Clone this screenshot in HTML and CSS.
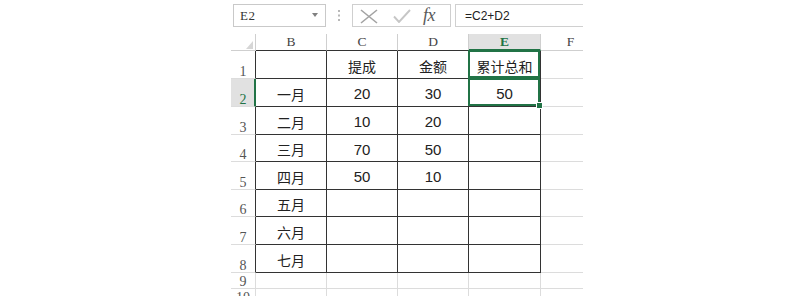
FILE: index.html
```html
<!DOCTYPE html>
<html lang="zh">
<head>
<meta charset="utf-8">
<title>Excel</title>
<link rel="stylesheet" href="styles.css">
</head>
<body>
<div class="app">
  <div class="toolbar">
    <div class="namebox">
      <span class="name">E2</span>
      <svg class="caret" width="6" height="4" viewBox="0 0 6 4"><polygon points="0,0 6,0 3,4" fill="#808080"/></svg>
    </div>
    <div class="grip">
      <svg width="2" height="11" viewBox="0 0 2 11"><rect x="0" y="0" width="2" height="2" fill="#b8b8b8"/><rect x="0" y="4.5" width="2" height="2" fill="#b8b8b8"/><rect x="0" y="9" width="2" height="2" fill="#b8b8b8"/></svg>
    </div>
    <div class="buttons">
      <svg class="ic-x" width="18" height="15" viewBox="0 0 18 15"><path d="M1 1 L17 14 M17 1 L1 14" stroke="#a3a3a3" stroke-width="1.6" fill="none"/></svg>
      <svg class="ic-check" width="18" height="14" viewBox="0 0 18 14"><path d="M1 7.5 L6 13 L17 1" stroke="#c6c6c6" stroke-width="1.9" fill="none"/></svg>
      <span class="fx">fx</span>
    </div>
    <div class="formula">=C2+D2</div>
  </div>

  <div class="sheet">
    <!-- header row -->
    <div class="c corner"><svg width="7" height="8" viewBox="0 0 7 8"><polygon points="7,0 7,8 0,8" fill="#d6d6d6"/></svg></div>
    <div class="c h tb">B</div>
    <div class="c h tb">C</div>
    <div class="c h tb">D</div>
    <div class="c h hsel">E</div>
    <div class="c h">F</div>

    <!-- row 1 -->
    <div class="c r rl">1</div>
    <div class="c t"></div>
    <div class="c t">提成</div>
    <div class="c t">金额</div>
    <div class="c t e1">累计总和</div>
    <div class="c"></div>

    <!-- row 2 -->
    <div class="c r rsel">2</div>
    <div class="c t">一月</div>
    <div class="c t n">20</div>
    <div class="c t n">30</div>
    <div class="c t n e2">50</div>
    <div class="c"></div>

    <!-- row 3 -->
    <div class="c r rl">3</div>
    <div class="c t">二月</div>
    <div class="c t n">10</div>
    <div class="c t n">20</div>
    <div class="c t"></div>
    <div class="c"></div>

    <!-- row 4 -->
    <div class="c r rl">4</div>
    <div class="c t">三月</div>
    <div class="c t n">70</div>
    <div class="c t n">50</div>
    <div class="c t"></div>
    <div class="c"></div>

    <!-- row 5 -->
    <div class="c r rl">5</div>
    <div class="c t">四月</div>
    <div class="c t n">50</div>
    <div class="c t n">10</div>
    <div class="c t"></div>
    <div class="c"></div>

    <!-- row 6 -->
    <div class="c r rl">6</div>
    <div class="c t">五月</div>
    <div class="c t"></div>
    <div class="c t"></div>
    <div class="c t"></div>
    <div class="c"></div>

    <!-- row 7 -->
    <div class="c r rl">7</div>
    <div class="c t">六月</div>
    <div class="c t"></div>
    <div class="c t"></div>
    <div class="c t"></div>
    <div class="c"></div>

    <!-- row 8 -->
    <div class="c r rl">8</div>
    <div class="c t">七月</div>
    <div class="c t"></div>
    <div class="c t"></div>
    <div class="c t"></div>
    <div class="c"></div>

    <!-- row 9 -->
    <div class="c r">9</div>
    <div class="c"></div>
    <div class="c"></div>
    <div class="c"></div>
    <div class="c"></div>
    <div class="c"></div>

    <!-- row 10 -->
    <div class="c r">10</div>
    <div class="c"></div>
    <div class="c"></div>
    <div class="c"></div>
    <div class="c"></div>
    <div class="c"></div>
  </div>
</div>
</body>
</html>
```

FILE: styles.css
```css
html, body {
  margin: 0;
  background: #ffffff;
  overflow: hidden;
}

.app {
  margin-left: 231px;
  width: 352px;
  padding-top: 4px;
  overflow: hidden;
}

/* ---------- formula bar ---------- */
.toolbar {
  display: flex;
  height: 23px;
  width: 360px;
}

.namebox {
  margin-left: 2px;
  width: 93px;
  box-sizing: border-box;
  border: 1px solid #c9c9c9;
  display: flex;
  align-items: center;
  justify-content: space-between;
  padding: 0 7px 0 6px;
}

.name {
  font: 13px "Liberation Serif", serif;
  color: #333;
  letter-spacing: 0.5px;
}

.caret {
  margin-top: -2px;
}

.grip {
  width: 26px;
  display: flex;
  align-items: center;
  justify-content: center;
}

.buttons {
  width: 99px;
  box-sizing: border-box;
  border: 1px solid #cfcfcf;
  display: flex;
  align-items: center;
  padding-left: 7px;
}

.ic-x {
  margin-top: 1px;
}

.ic-check {
  margin-left: 15px;
  margin-top: 1px;
}

.fx {
  margin-left: 12px;
  font: italic 18px "Liberation Serif", serif;
  color: #5a5a5a;
  letter-spacing: -0.5px;
}

.formula {
  margin-left: 4px;
  flex: 1;
  box-sizing: border-box;
  border: 1px solid #d0d0d0;
  border-right: none;
  padding-left: 9px;
  display: flex;
  align-items: center;
  font: 12px "Liberation Sans", sans-serif;
  color: #222;
}

/* ---------- sheet grid ---------- */
.sheet {
  margin-top: 7px;
  display: grid;
  grid-template-columns: 25px 71px 71px 71px 72px 60px;
  grid-template-rows: 17px 28px 28px 28px 27px 28px 27px 28px 28px 16px 16px;
}

.c {
  box-sizing: border-box;
  border-right: 1px solid #dcdcdc;
  border-bottom: 1px solid #dcdcdc;
  display: flex;
  align-items: center;
  justify-content: center;
  font: 14px "Liberation Sans", "Noto Sans CJK SC", sans-serif;
  color: #222;
  padding-top: 2px;
  position: relative;
}

.n {
  font-size: 15px;
}

/* corner */
.corner {
  justify-content: flex-end;
  align-items: flex-end;
  padding: 0 2px 1px 0;
  border-right-color: #cfcfcf;
  border-bottom-color: #cfcfcf;
}

/* column headers */
.h {
  font: 13.5px "Liberation Serif", serif;
  color: #444;
  padding-top: 0;
  border-right-color: #cfcfcf;
  border-bottom-color: #cfcfcf;
}

.h.tb {
  border-bottom-color: #333;
}

.hsel {
  background: #e1e1e1;
  color: #217346;
  font-weight: bold;
  border-bottom: 2px solid #217346;
}

/* row headers */
.r {
  font: 14px "Liberation Serif", serif;
  color: #555;
  align-items: flex-end;
  line-height: 13px;
  padding-top: 0;
  padding-bottom: 0;
}

.r.rl {
  border-right-color: #333;
}

.rsel {
  background: #e1e1e1;
  color: #217346;
  border-right: 2px solid #217346;
  padding-left: 1px;
}

/* table cells */
.t {
  border-right-color: #333;
  border-bottom-color: #333;
}

/* selection frames */
.e1::after,
.e2::after {
  content: "";
  position: absolute;
  top: -1px;
  left: -1px;
  right: 0;
  bottom: 0;
  border: 2px solid #217346;
  z-index: 1;
}

.e2::before {
  content: "";
  position: absolute;
  right: -3px;
  bottom: -3px;
  width: 5px;
  height: 5px;
  background: #217346;
  border: 1px solid #ffffff;
  z-index: 2;
}
```
